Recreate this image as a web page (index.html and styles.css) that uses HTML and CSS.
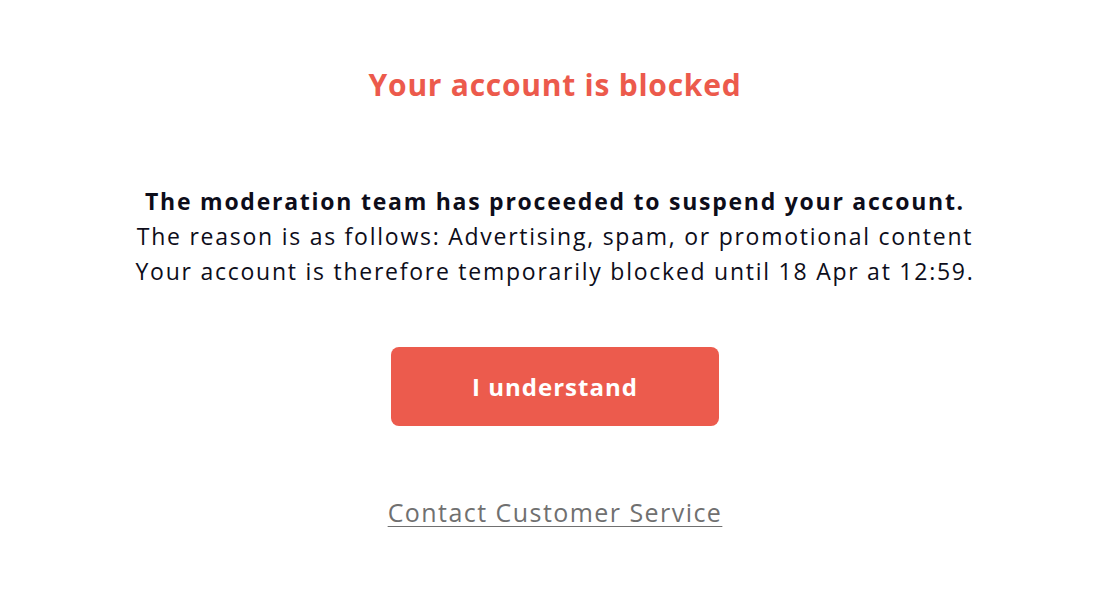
FILE: index.html
```html
<!DOCTYPE html>
<html lang="en">
<head>
<meta charset="utf-8">
<title>Account blocked</title>
<link rel="stylesheet" href="styles.css">
</head>
<body>
<main class="page">
  <h1 class="title">Your account is blocked</h1>
  <div class="message">
    <p class="line strong">The moderation team has proceeded to suspend your account.</p>
    <p class="line">The reason is as follows: Advertising, spam, or promotional content</p>
    <p class="line">Your account is therefore temporarily blocked until 18 Apr at 12:59.</p>
  </div>
  <button class="btn" type="button">I understand</button>
  <a class="link" href="#">Contact Customer Service</a>
</main>
</body>
</html>
```
FILE: styles.css
```css
html, body {
  margin: 0;
  padding: 0;
  background: #ffffff;
}
body {
  font-family: "Open Sans", "Liberation Sans", sans-serif;
}
.page {
  display: flex;
  flex-direction: column;
  align-items: center;
  text-align: center;
  padding-top: 65px;
}
.title {
  margin: 0;
  font-size: 30px;
  line-height: 40px;
  font-weight: 700;
  letter-spacing: 0.75px;
  color: #ec5a4c;
}
.message {
  margin-top: 79px;
  color: #0d0d1a;
}
.line {
  margin: 0;
  font-size: 23px;
  line-height: 35px;
  letter-spacing: 1.75px;
}
.strong {
  font-weight: 700;
}
.btn {
  margin-top: 58px;
  width: 328px;
  height: 79px;
  border: 0;
  border-radius: 8px;
  background: #ec5b4d;
  color: #ffffff;
  font-family: inherit;
  font-size: 24px;
  font-weight: 700;
  letter-spacing: 1px;
  cursor: pointer;
}
.link {
  margin-top: 71px;
  font-size: 25px;
  line-height: 30px;
  letter-spacing: 1.45px;
  color: #707070;
  text-decoration: underline;
  text-underline-offset: 4px;
}
```
